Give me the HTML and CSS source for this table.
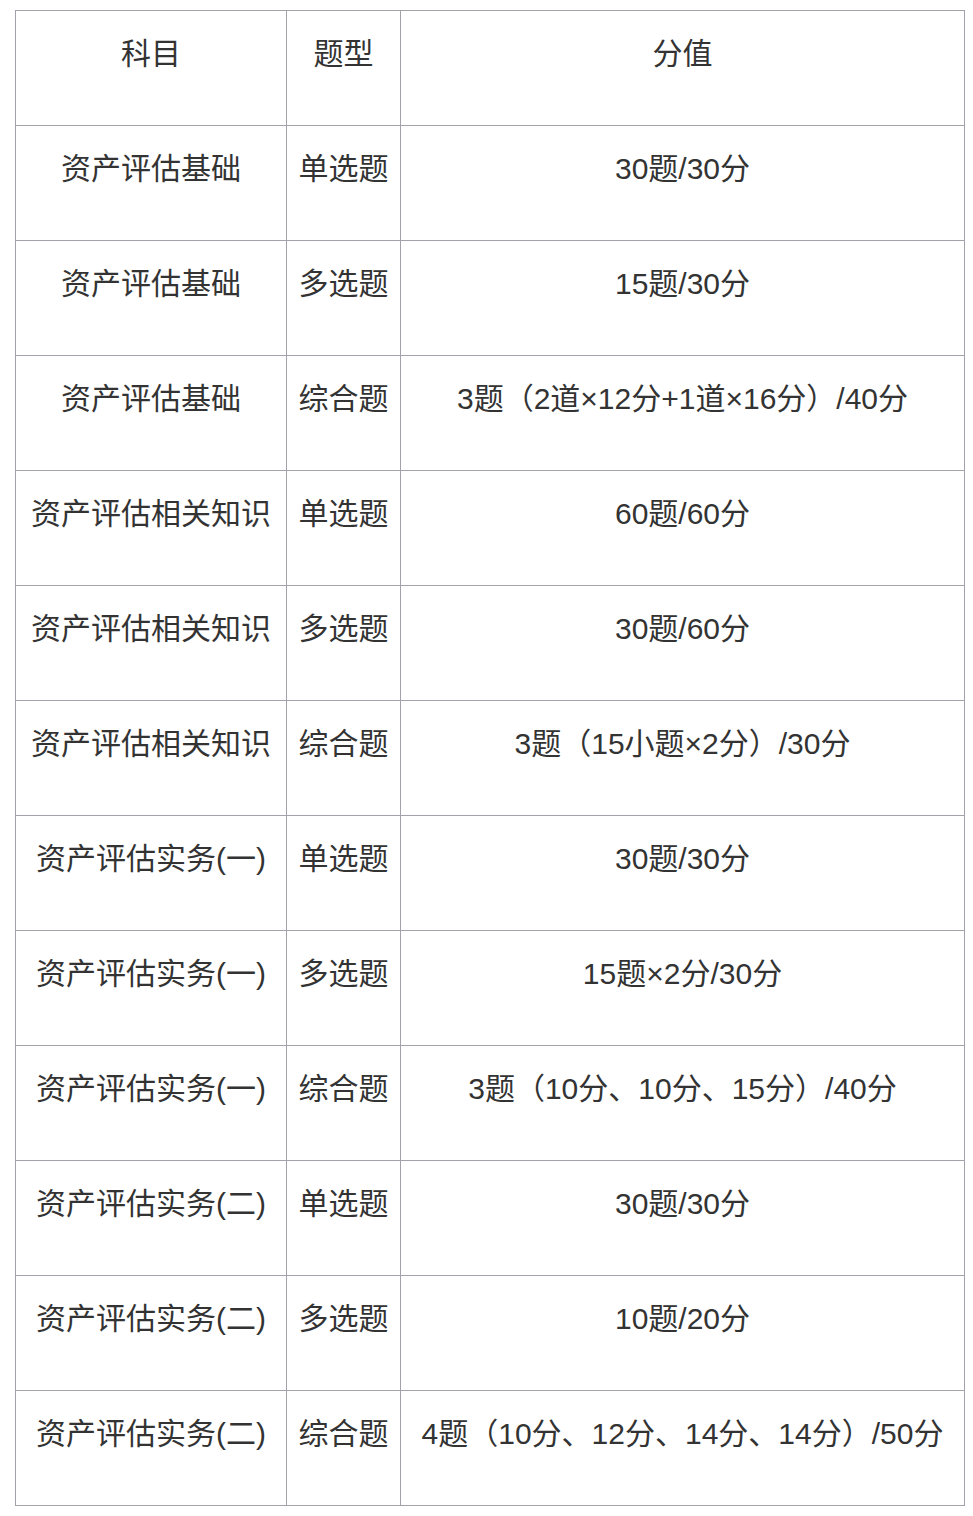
FILE: index.html
```html
<!DOCTYPE html>
<html lang="zh">
<head>
<meta charset="utf-8">
<link rel="stylesheet" href="styles.css">
</head>
<body>
<div class="wrap">
<table class="exam">
<colgroup><col class="c1"><col class="c2"><col class="c3"></colgroup>
<tr><td>科目</td><td>题型</td><td>分值</td></tr>
<tr><td>资产评估基础</td><td>单选题</td><td>30题/30分</td></tr>
<tr><td>资产评估基础</td><td>多选题</td><td>15题/30分</td></tr>
<tr><td>资产评估基础</td><td>综合题</td><td>3题（2道×12分+1道×16分）/40分</td></tr>
<tr><td>资产评估相关知识</td><td>单选题</td><td>60题/60分</td></tr>
<tr><td>资产评估相关知识</td><td>多选题</td><td>30题/60分</td></tr>
<tr><td>资产评估相关知识</td><td>综合题</td><td>3题（15小题×2分）/30分</td></tr>
<tr><td>资产评估实务(一)</td><td>单选题</td><td>30题/30分</td></tr>
<tr><td>资产评估实务(一)</td><td>多选题</td><td>15题×2分/30分</td></tr>
<tr><td>资产评估实务(一)</td><td>综合题</td><td>3题（10分、10分、15分）/40分</td></tr>
<tr><td>资产评估实务(二)</td><td>单选题</td><td>30题/30分</td></tr>
<tr><td>资产评估实务(二)</td><td>多选题</td><td>10题/20分</td></tr>
<tr><td>资产评估实务(二)</td><td>综合题</td><td>4题（10分、12分、14分、14分）/50分</td></tr>
</table>
</div>
</body>
</html>
```
FILE: styles.css
```css
html, body {
  margin: 0;
  padding: 0;
  background: #fff;
}
.wrap {
  padding: 10px 0 0 15px;
}
.exam {
  border-collapse: collapse;
  table-layout: fixed;
  width: 949px;
  font-family: "Liberation Sans", Arial, "Noto Sans CJK SC", sans-serif;
  font-size: 30px;
  color: #333;
}
.c1 { width: 271px; }
.c2 { width: 114px; }
.c3 { width: 564px; }
.exam td {
  border: 1px solid #a3a2aa;
  height: 115px;
  box-sizing: border-box;
  padding: 21px 0 0 0;
  vertical-align: top;
  text-align: center;
  line-height: 44px;
  white-space: nowrap;
}
```
